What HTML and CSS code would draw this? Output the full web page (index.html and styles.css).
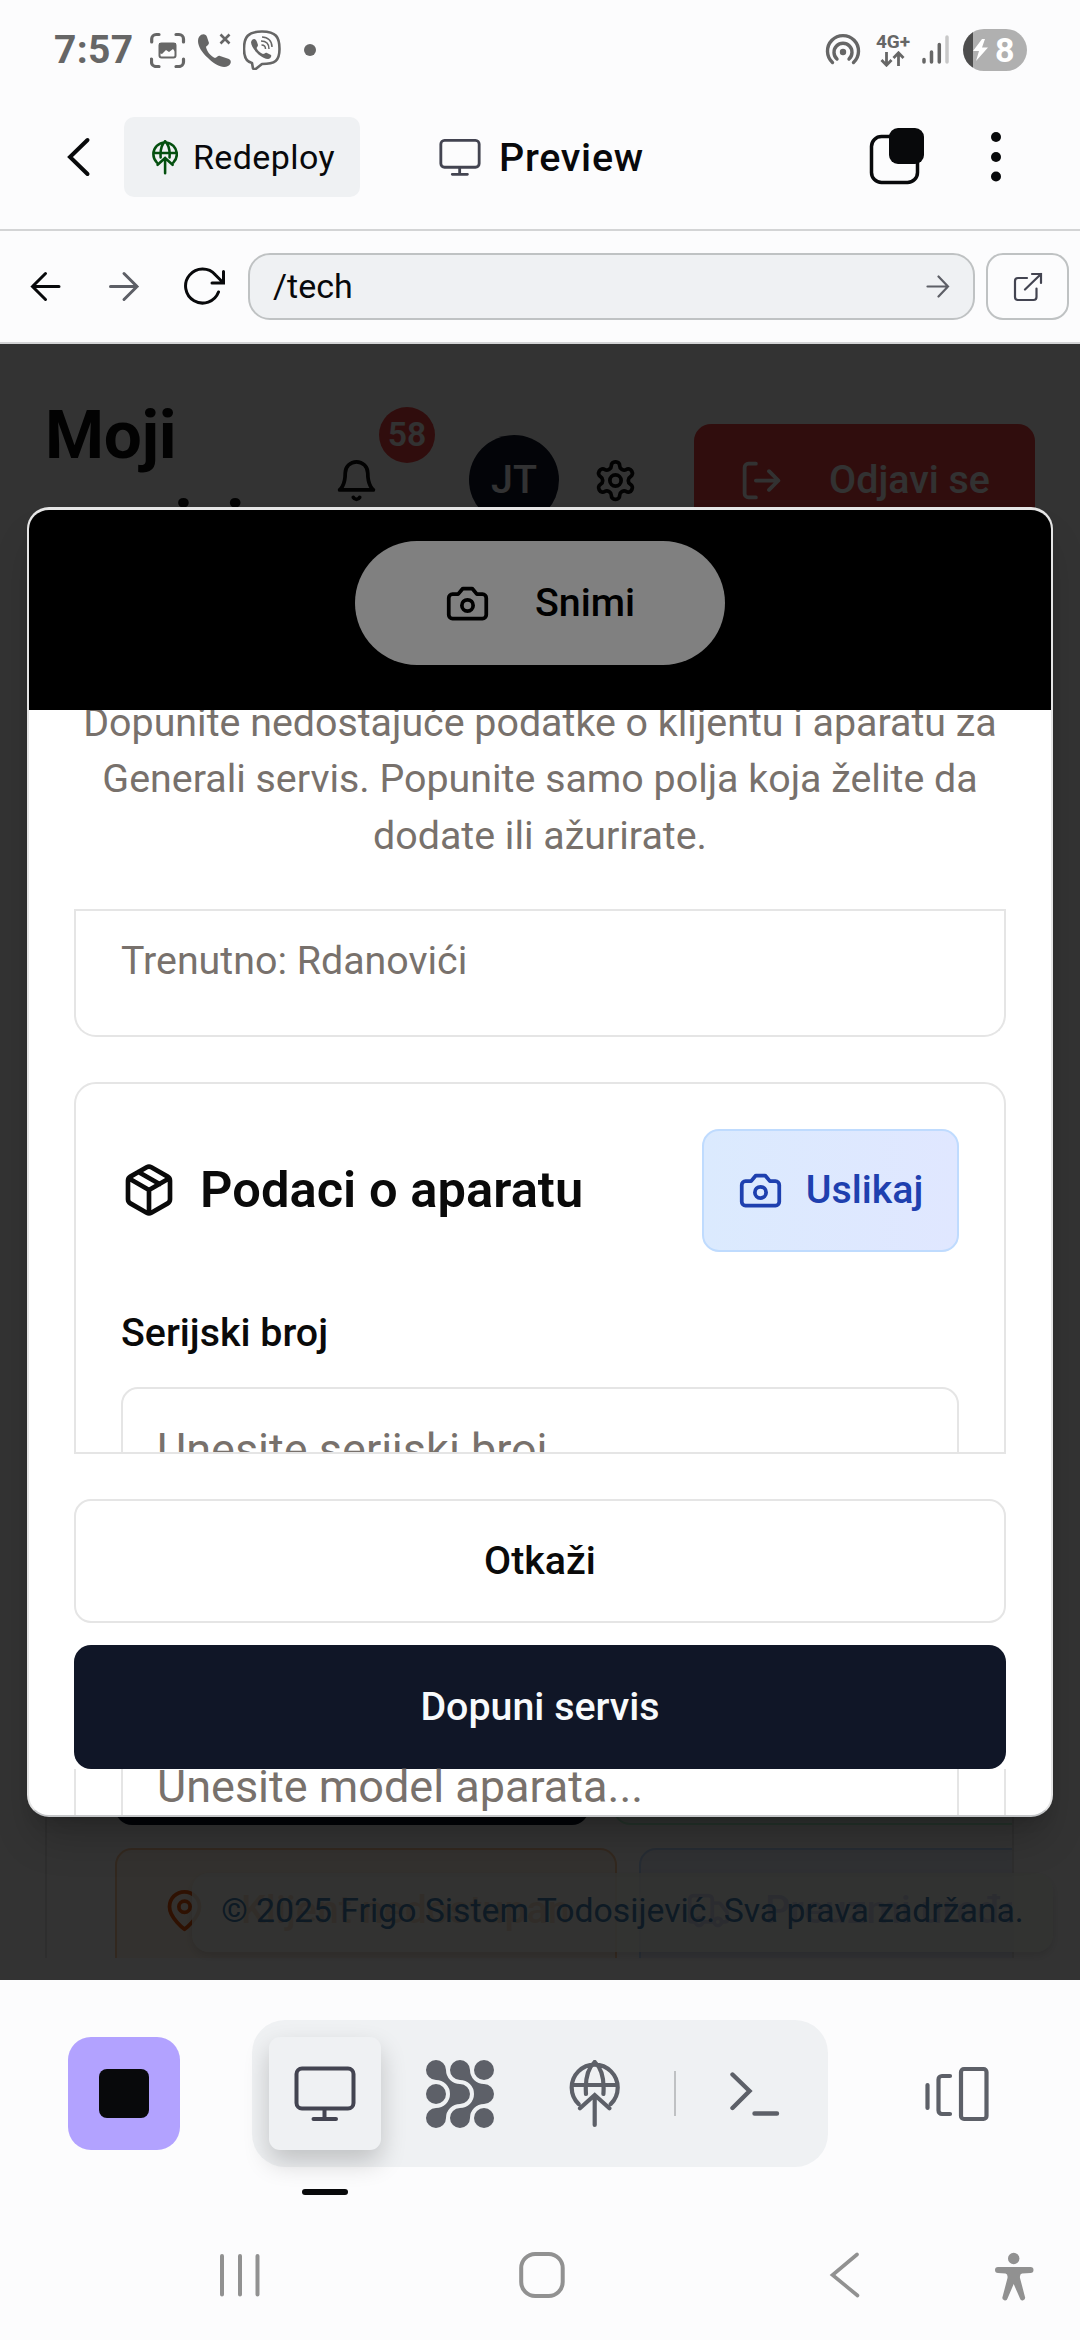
FILE: index.html
```html
<!DOCTYPE html>
<html lang="sr">
<head>
<meta charset="utf-8">
<title>Preview</title>
<link rel="stylesheet" href="styles.css">
</head>
<body>
<svg class="defs" aria-hidden="true">
  <symbol id="deploy" viewBox="569 2060 51 68">
    <path d="M578.6 2104A23 23 0 1 1 610.8 2104M572 2085H617.400M594.700 2062C588 2068 585 2080 586 2094M594.700 2062C601.400 2068 604.400 2080 603.400 2094M580 2108.300L594.700 2095L609.400 2108.300M594.700 2096V2125" stroke="currentColor" fill="none" stroke-linecap="round"/>
  </symbol>
  <symbol id="monitor" viewBox="294 2065 62 58">
    <rect x="296.500" y="2068.500" width="57" height="40" rx="5.500" fill="none" stroke="currentColor"/>
    <path d="M324.500 2109V2118M313.500 2119H336" fill="none" stroke="currentColor" stroke-linecap="round"/>
  </symbol>
  <symbol id="camera" viewBox="0 0 24 24">
    <path d="M14.5 4h-5L7 7H4a2 2 0 0 0-2 2v9a2 2 0 0 0 2 2h16a2 2 0 0 0 2-2V9a2 2 0 0 0-2-2h-3l-2.500-3z"/><circle cx="12" cy="13" r="3"/>
  </symbol>
</svg>

<div class="status">
  <span class="clock">7:57</span>
  <svg class="st-shot" width="36" height="36" viewBox="150 32 36 36" fill="none" stroke="#666" stroke-width="3.200" stroke-linecap="round"><path d="M151.700 42V39a4.500 4.500 0 0 1 4.500-4.500H159M176 34.500h3a4.500 4.500 0 0 1 4.500 4.500v3M183.500 59v3a4.500 4.500 0 0 1-4.500 4.500h-3M159 66.500h-3a4.500 4.500 0 0 1-4.500-4.500v-3"/><rect x="159.500" y="43.500" width="16" height="14" rx="2" stroke-width="2"/><path d="M159 53V43h17v10l-3-4-4 3-3-2-4 4z" fill="#666" stroke="none"/></svg>
  <svg class="st-call" width="36" height="36" viewBox="196 32 36 36"><path d="M199 37c3-4 7-3 8 0l2 6c0 2-3 3-3 4 1 5 5 9 9 11 2 0 3-3 5-2l9 3c3 2 2 5-1 7-5 3-13-1-20-8-8-7-12-16-9-21z" fill="#666"/><path d="M220.500 34.500l9 9M229.500 34.500l-9 9" stroke="#666" stroke-width="2.600"/></svg>
  <svg class="st-viber" width="38" height="40" viewBox="243 31 38 40" fill="none" stroke="#666"><path d="M252 64c-6-1-8-6-8-14 0-12 4-17.500 18-17.500S279.500 38 279.500 50 275 65 262 65l-7 5.500-2-1z" stroke-width="2.600" stroke-linejoin="round"/><path d="M252 41c2-2 4-1 5 2l1 3c0 2-2 2-1 4 2 3 4 4 6 5 2 0 2-2 4-1l4 2c1 2-1 4-3 4-8-1-17-11-17-17z" fill="#666" stroke="none"/><path d="M261 42c5 0 8 3 8 8M262 38c6 0 10 4 10 10M261.500 46c2 0 4 1 4 4" stroke-width="1.500"/></svg>
  <i class="st-dot"></i>
  <svg class="st-hotspot" width="36" height="34" viewBox="825 34 36 34" fill="none" stroke="#666" stroke-width="3.400" stroke-linecap="round"><path d="M832.500 63.500A15.500 15.500 0 1 1 853.500 63.500M837 60A9 9 0 1 1 849 60"/><circle cx="843" cy="53" r="3.200" fill="#666" stroke="none"/></svg>
  <span class="net"><b>4G+</b><svg width="26" height="16" viewBox="880 51 26 16" fill="none" stroke="#666" stroke-width="2.800"><path d="M886.500 52V65M881.500 60l5 5.200 5-5.200M898.500 66V53M893.500 58l5-5.200 5 5.200"/></svg></span>
  <svg class="st-signal" width="28" height="30" viewBox="921 35 28 30" stroke="#666" stroke-width="3.500" stroke-linecap="round"><path d="M924 59.500V62M931.500 52V62M939.300 44.500V62"/><path d="M947 37V62" stroke="#c8c8c8"/></svg>
  <span class="battery"><svg width="16" height="22" viewBox="0 0 16 22"><path d="M9 0L0 12h6l-3 10L15 8.500H9L12 0z" fill="#fff"/></svg><b>8</b></span>
</div>

<header class="header">
  <svg class="chev" width="24" height="42" viewBox="67 136 24 42" fill="none" stroke="#08090b" stroke-width="4" stroke-linecap="round"><path d="M87.500 140L70 157L87.500 174"/></svg>
  <button class="redeploy"><svg class="ic-green" width="26" height="35"><use href="#deploy"/></svg><span>Redeploy</span></button>
  <svg class="ic-mon" width="42" height="39"><use href="#monitor"/></svg>
  <span class="title">Preview</span>
  <svg class="tabs" width="58" height="60" viewBox="868 127 58 60"><rect x="871.500" y="136.500" width="46" height="46" rx="10" fill="none" stroke="#08090b" stroke-width="3.500"/><rect x="889" y="128" width="35" height="36" rx="9" fill="#08090b"/></svg>
  <svg class="more" width="12" height="52" viewBox="990 131 12 52" fill="#08090b"><circle cx="996" cy="137" r="5"/><circle cx="996" cy="157" r="5"/><circle cx="996" cy="176.500" r="5"/></svg>
</header>

<div class="urlbar">
  <svg class="u-back" width="32" height="32" viewBox="30 271 32 32" fill="none" stroke="#08090b" stroke-width="3" stroke-linecap="round"><path d="M59 286.500H32.500M45.500 273.500L32.500 286.500L45.500 299.500"/></svg>
  <svg class="u-fwd" width="32" height="32" viewBox="108 271 32 32" fill="none" stroke="#5d5f66" stroke-width="3" stroke-linecap="round"><path d="M110.500 286.500H137M124 273.500L137 286.500L124 299.500"/></svg>
  <svg class="u-load" width="44" height="40" viewBox="183 267 44 40" fill="none" stroke="#08090b" stroke-width="3" stroke-linecap="round"><path d="M218.500 292A17 17 0 1 1 215.500 275L223 282.500M223.500 271.500V283H212"/></svg>
  <div class="address"><span>/tech</span><svg width="24" height="24" viewBox="926 275 24 24" fill="none" stroke="#5d5f66" stroke-width="2.200" stroke-linecap="round"><path d="M927.500 286.500H948M938.500 276.500L948 286.500L938.500 296.500"/></svg></div>
  <button class="ext"><svg width="30" height="30" viewBox="1013 272 30 30" fill="none" stroke="#434451" stroke-width="2.200" stroke-linecap="round"><path d="M1027 278H1018a3 3 0 0 0-3 3V297a3 3 0 0 0 3 3H1033.500a3 3 0 0 0 3-3V288.500M1025 289.500L1041 274M1032 274H1041V283"/></svg></button>
</div>

<main class="viewport">
  <div class="page">
    <div class="top">
      <h1>Moji servisi</h1>
      <span class="bell"><svg class="lu" width="45" height="45" viewBox="0 0 24 24"><path d="M6 8a6 6 0 0 1 12 0c0 7 3 9 3 9H3s3-2 3-9"/><path d="M10.300 21a1.940 1.940 0 0 0 3.400 0"/></svg><b>58</b></span>
      <span class="avatar">JT</span>
      <svg class="lu gear" width="45" height="45" viewBox="0 0 24 24"><path d="M12.220 2h-.44a2 2 0 0 0-2 2v.18a2 2 0 0 1-1 1.730l-.43.25a2 2 0 0 1-2 0l-.15-.08a2 2 0 0 0-2.730.73l-.22.38a2 2 0 0 0 .73 2.730l.15.1a2 2 0 0 1 1 1.720v.51a2 2 0 0 1-1 1.740l-.15.09a2 2 0 0 0-.73 2.730l.22.38a2 2 0 0 0 2.730.73l.15-.08a2 2 0 0 1 2 0l.43.25a2 2 0 0 1 1 1.730V20a2 2 0 0 0 2 2h.44a2 2 0 0 0 2-2v-.18a2 2 0 0 1 1-1.730l.43-.25a2 2 0 0 1 2 0l.15.08a2 2 0 0 0 2.730-.73l.22-.39a2 2 0 0 0-.73-2.730l-.15-.08a2 2 0 0 1-1-1.740v-.5a2 2 0 0 1 1-1.740l.15-.09a2 2 0 0 0 .73-2.730l-.22-.38a2 2 0 0 0-2.730-.73l-.15.08a2 2 0 0 1-2 0l-.43-.25a2 2 0 0 1-1-1.730V4a2 2 0 0 0-2-2z"/><circle cx="12" cy="12" r="3"/></svg>
      <button class="logout"><svg class="lu" width="45" height="45" viewBox="0 0 24 24"><path d="M9 21H5a2 2 0 0 1-2-2V5a2 2 0 0 1 2-2h4M16 17l5-5-5-5M21 12H9"/></svg><span>Odjavi se</span></button>
    </div>
    <section class="job">
      <div class="row"><span class="act dark"></span><span class="act green"></span></div>
      <div class="row second">
        <span class="act orange"><svg class="lu" width="45" height="45" viewBox="0 0 24 24"><path d="M20 10c0 6-8 12-8 12s-8-6-8-12a8 8 0 0 1 16 0Z"/><circle cx="12" cy="10" r="3"/></svg><span>Klijent nedostupan</span></span>
        <span class="act blue"><svg class="lu" width="45" height="45" viewBox="0 0 24 24"><path d="M14 18V6a2 2 0 0 0-2-2H4a2 2 0 0 0-2 2v11a1 1 0 0 0 1 1h2M15 18H9M19 18h2a1 1 0 0 0 1-1v-3.650a1 1 0 0 0-.22-.62l-3.480-4.350A1 1 0 0 0 17.520 8H14"/><circle cx="17" cy="18" r="2"/><circle cx="7" cy="18" r="2"/></svg><span>Preuzmi uređaj</span></span>
      </div>
    </section>
  </div>
  <footer class="rights">© 2025 Frigo Sistem Todosijević. Sva prava zadržana.</footer>
  <div class="scrim"></div>

  <div class="modal">
    <div class="capture"><button class="snimi"><svg class="lu" width="45" height="45"><use href="#camera"/></svg><span>Snimi</span></button></div>
    <p class="desc">Dopunite nedostajuće podatke o klijentu i aparatu za Generali servis. Popunite samo polja koja želite da dodate ili ažurirate.</p>
    <div class="scroll">
      <div class="card first">Trenutno: Rdanovići</div>
      <div class="card device">
        <div class="card-head">
          <svg class="lu" width="56" height="56" viewBox="0 0 24 24"><path d="m7.500 4.270 9 5.150M21 8a2 2 0 0 0-1-1.730l-7-4a2 2 0 0 0-2 0l-7 4A2 2 0 0 0 3 8v8a2 2 0 0 0 1 1.730l7 4a2 2 0 0 0 2 0l7-4A2 2 0 0 0 21 16ZM3.300 7l8.700 5 8.700-5M12 22V12"/></svg>
          <h2>Podaci o aparatu</h2>
          <button class="uslikaj"><svg class="lu" width="45" height="45"><use href="#camera"/></svg><span>Uslikaj</span></button>
        </div>
        <label>Serijski broj</label>
        <div class="field">Unesite serijski broj...</div>
      </div>
    </div>
    <div class="actions">
      <button class="cancel">Otkaži</button>
      <button class="submit">Dopuni servis</button>
    </div>
    <div class="rest"><div class="rest-field">Unesite model aparata...</div></div>
  </div>
</main>

<div class="toolbar">
  <button class="stop"><i></i></button>
  <div class="dock">
    <button class="tile"><svg width="62" height="58"><use href="#monitor"/></svg></button>
    <svg class="agent" width="70" height="70" viewBox="425 2059 70 70" fill="#5d6068">
      <path id="blob" d="M446 2070A14 14 0 0 0 460 2084A10 10 0 0 1 460 2104A14 14 0 0 0 446 2118A10 10 0 1 1 436 2108A14 14 0 0 0 436 2080A10 10 0 1 1 446 2070Z"/>
      <use href="#blob" x="24"/>
      <circle cx="436" cy="2094" r="10"/><circle cx="484" cy="2070" r="10"/><circle cx="484" cy="2118" r="10"/>
    </svg>
    <svg class="globe" width="51" height="68"><use href="#deploy"/></svg>
    <i class="sep"></i>
    <svg class="term" width="52" height="48" viewBox="729 2070 52 48" fill="none" stroke="#5d6068" stroke-width="4.400" stroke-linecap="round"><path d="M732.500 2074.500L749.500 2091L732.500 2108M754.500 2113.500H777"/></svg>
  </div>
  <svg class="panes" width="66" height="58" viewBox="924 2065 66 58" fill="none" stroke="#5d6068" stroke-width="4.200" stroke-linecap="round"><path d="M927.500 2085V2108M950 2076H942a3.500 3.500 0 0 0-3.500 3.500V2110.500a3.500 3.500 0 0 0 3.500 3.500H950"/><rect x="961" y="2069" width="25.500" height="50" rx="3"/></svg>
  <i class="mark"></i>
</div>

<nav class="nav">
  <svg class="n-recent" width="42" height="44" viewBox="219 2253 42 44" stroke="#919191" stroke-width="4" stroke-linecap="round"><path d="M222 2256V2294.500M240 2256V2294.500M257.500 2256V2294.500"/></svg>
  <svg class="n-home" width="48" height="48" viewBox="518 2251 48 48"><rect x="521.200" y="2254" width="41.500" height="42" rx="14" fill="none" stroke="#919191" stroke-width="4"/></svg>
  <svg class="n-back" width="32" height="48" viewBox="829 2251 32 48" fill="none" stroke="#919191" stroke-width="3.600" stroke-linecap="round"><path d="M857 2254.500L832.500 2275L857.500 2295.500"/></svg>
  <svg class="n-acc" width="40" height="50" viewBox="994 2253 40 50" fill="#919191"><circle cx="1013.700" cy="2259.500" r="5.700"/><path d="M998 2268H1030.500a3 3 0 0 1 0 6L1022 2274.500Q1019.500 2275 1020 2279L1025 2298a2.600 2.600 0 0 1-5 1.500L1013.700 2285L1007.500 2299.500a2.600 2.600 0 0 1-5-1.500L1007.500 2279Q1008 2275 1005.500 2274.500L998 2274a3 3 0 0 1 0-6z"/></svg>
</nav>
</body>
</html>
```
FILE: styles.css
```css
* { box-sizing: border-box; }
body { margin: 0; width: 1080px; height: 2340px; overflow: hidden; background: #fcfcfd; font-family: Roboto, "Noto Sans", sans-serif; color: #0a0a0a; display: flex; flex-direction: column; }
button { font: inherit; color: inherit; border: 0; padding: 0; margin: 0; background: none; display: flex; align-items: center; justify-content: center; flex: none; }
svg { display: block; flex: none; }
.defs { position: absolute; width: 0; height: 0; }
.lu { fill: none; stroke: currentColor; stroke-width: 2; stroke-linecap: round; stroke-linejoin: round; }

/* Phone status bar */
.status { height: 85px; padding-top: 15px; flex: none; display: flex; align-items: center; color: #666; }
.clock { font-weight: 700; font-size: 39px; width: 96px; margin-left: 54px; white-space: nowrap; letter-spacing: .3px; }
.st-call { margin-left: 10px; }
.st-viber { margin-left: 11px; }
.st-dot { width: 12px; height: 12px; border-radius: 50%; background: #666; margin-left: 23px; }
.st-hotspot { margin-left: 509px; }
.net { width: 34px; margin-left: 15px; display: flex; flex-direction: column; align-items: center; gap: 2px; }
.net b { font-size: 19px; line-height: 15px; font-weight: 700; }
.st-signal { margin-left: 11px; }
.battery { margin-left: 14px; width: 64px; height: 42px; border-radius: 21px; background: linear-gradient(90deg, #4d4d4d 10px, #b0b0b0 10px); display: flex; align-items: center; padding-left: 10px; gap: 6px; color: #fff; }
.battery b { font-size: 34px; line-height: 42px; }

/* App header */
.header { height: 146px; flex: none; border-bottom: 2px solid #d3d4d5; display: flex; align-items: center; }
.chev { margin-left: 67px; }
.redeploy { width: 236px; height: 80px; margin-left: 33px; background: #eff1f3; border-radius: 10px; font-size: 34px; gap: 15px; justify-content: flex-start; padding-left: 28px; color: #08090b; font-weight: 400; }
.redeploy span { letter-spacing: .4px; }
.ic-green { color: #04500f; stroke-width: 5; }
.ic-mon { margin-left: 79px; color: #434451; stroke-width: 4.2; }
.title { flex: none; font-weight: 500; font-size: 39.5px; margin-left: 18px; width: 369px; color: #08090b; letter-spacing: .7px; }
.more { margin-left: 64px; }

/* Browser row */
.urlbar { height: 113px; flex: none; border-bottom: 2px solid #d3d4d5; display: flex; align-items: center; }
.u-back { margin-left: 30px; }
.u-fwd { margin-left: 46px; }
.u-load { margin-left: 43px; }
.address { width: 727px; height: 67px; margin-left: 21px; padding: 0 23px; border: 2px solid #bfc2c3; border-radius: 22px; background: #eff1f3; display: flex; align-items: center; justify-content: space-between; font-size: 34px; color: #08090b; }
.address span { padding-bottom: 2px; }
.ext { width: 83px; height: 67px; margin-left: 11px; border: 2px solid #bfc2c3; border-radius: 17px; }

/* Previewed site */
.viewport { position: relative; height: 1636px; flex: none; overflow: hidden; background: #fff; font-size: 39.375px; line-height: 56.25px; }
.page { height: 1614px; padding-top: 44px; display: flex; flex-direction: column; justify-content: space-between; }
.top { height: 182px; padding: 2px 0 0 45px; display: flex; align-items: center; }
.top h1 { margin: 0; flex: none; width: 289px; padding-right: 80px; font-size: 67.5px; line-height: 90px; font-weight: 700; letter-spacing: -.3px; color: #0a0a0a; }
.bell { position: relative; }
.bell b { position: absolute; left: 45px; top: -51px; width: 56px; height: 56px; border-radius: 50%; background: #ef4444; color: #fafafa; font-size: 33.75px; line-height: 56px; text-align: center; font-weight: 600; }
.avatar { width: 90px; height: 90px; margin-left: 90px; border-radius: 50%; background: #0f172a; color: #f8fafc; text-align: center; line-height: 90px; font-weight: 500; }
.gear { margin-left: 34px; }
.logout { width: 341px; height: 112px; margin-left: 56px; border-radius: 17px; background: #ef4444; color: #fafafa; font-weight: 500; gap: 45px; }
.job { height: 400px; width: 969px; margin-left: 45px; border: 2px solid #e5e5e5; border-width: 0 2px; overflow: hidden; display: flex; flex-direction: column; justify-content: flex-end; gap: 23px; padding-left: 68px; }
.row { display: flex; height: 112px; gap: 24px; }
.second { height: 110px; gap: 22px; }
.act { flex: none; width: 502px; height: 112px; border-radius: 17px; border: 2px solid; display: flex; align-items: center; padding-left: 45px; gap: 34px; font-weight: 500; white-space: nowrap; }
.second .act { height: 140px; padding-bottom: 16px; }
.dark { width: 474px; background: #0f172a; border-color: #0f172a; }
.green { background: #f6fef9; border-color: #bbf7d0; }
.orange { background: #fff5e9; border-color: #fbc79a; color: #ea580c; }
.blue { background: #eef2ff; border-color: #bfdbfe; color: #4338ca; }
.rights { position: absolute; left: 192px; top: 1529px; width: 861px; height: 79px; border-radius: 17px; background: rgba(245, 252, 244, .84); box-shadow: 0 4px 10px rgba(0, 0, 0, .12); color: #4682b4; font-size: 33.75px; line-height: 76px; text-align: center; white-space: nowrap; }
.scrim { position: absolute; inset: 0; background: rgba(0, 0, 0, .8); }

/* Dialog */
.modal { position: absolute; left: 27px; top: 163px; width: 1026px; height: 1310px; border: 2px solid #e5e5e5; border-top-width: 3px; border-bottom-color: #c4c6c8; border-radius: 22px; background: #fff; overflow: hidden; box-shadow: 0 28px 42px -8px rgba(0, 0, 0, .2), 0 11px 17px -11px rgba(0, 0, 0, .2); display: flex; flex-direction: column; }
.capture { position: relative; z-index: 1; flex: none; height: 200px; padding-top: 31px; background: #000; display: flex; justify-content: center; }
.snimi { width: 370px; height: 124px; border-radius: 62px; background: #808080; color: #000; font-weight: 500; gap: 45px; }
.desc { margin: -15px 45px 45px; text-align: center; color: #78716c; }
.scroll { flex: none; margin: 0 45px; height: 545px; border: 2px solid #e5e5e5; border-width: 2px 0; overflow: hidden; }
.card { border: 2px solid #e5e5e5; border-radius: 22px; padding: 0 45px; }
.first { height: 126px; border-top: 0; border-radius: 0 0 22px 22px; padding-top: 22px; color: #78716c; }
.device { margin-top: 45px; height: 600px; padding-top: 45px; }
.card-head { display: flex; align-items: center; }
.card-head h2 { margin: 0 auto 0 23px; font-size: 50.625px; line-height: 56px; font-weight: 600; letter-spacing: .05px; }
.uslikaj { width: 257px; height: 123px; border: 2px solid #bfdbfe; border-radius: 17px; background: linear-gradient(90deg, #dbeafe, #e0e7ff); color: #1e40af; font-weight: 500; gap: 23px; }
.device label { display: block; margin-top: 53px; font-weight: 500; }
.field { margin-top: 26px; height: 124px; border: 2px solid #e5e5e5; border-radius: 17px; padding: 0 34px; font-size: 45px; line-height: 122px; color: #78716c; }
.actions { flex: none; margin: 45px 45px 0; display: flex; flex-direction: column; gap: 22px; font-weight: 500; }
.actions button { height: 124px; border-radius: 17px; }
.actions .cancel { border: 2px solid #e5e5e5; }
.submit { background: #101627; color: #f8fafc; }
.rest { flex: 1; margin: 0 45px; padding: 0 45px; border: 2px solid #e5e5e5; border-width: 0 2px; }
.rest-field { height: 100%; border: 2px solid #e5e5e5; border-width: 0 2px; padding-left: 34px; font-size: 45px; line-height: 36px; color: #78716c; }

/* Bottom toolbar */
.toolbar { position: relative; height: 227px; flex: none; display: flex; align-items: center; color: #5d6068; }
.stop { width: 112px; height: 113px; margin-left: 68px; border-radius: 23px; background: #b2a2ff; }
.stop i { width: 50px; height: 49px; border-radius: 8px; background: #08090b; }
.dock { width: 576px; height: 147px; margin-left: 72px; border-radius: 33px; background: #eff1f3; padding-left: 17px; display: flex; align-items: center; }
.tile { width: 112px; height: 113px; border-radius: 11px; background: #eff1f3; box-shadow: 0 12px 26px rgba(0, 0, 0, .2); color: #434451; stroke-width: 4; }
.agent { margin-left: 44px; }
.globe { margin-left: 74px; stroke-width: 4.2; }
.sep { width: 2px; height: 45px; margin-left: 54px; background: #bfc1c3; }
.term { margin-left: 53px; }
.panes { margin-left: 96px; }
.mark { position: absolute; left: 302px; top: 209px; width: 46px; height: 6px; border-radius: 3px; background: #08090b; }

/* System navigation */
.nav { height: 133px; padding-top: 3px; flex: none; display: flex; align-items: center; }
.n-recent { margin-left: 219px; }
.n-home { margin-left: 257px; }
.n-back { margin-left: 263px; }
.n-acc { margin: 4px 0 0 133px; }
```
